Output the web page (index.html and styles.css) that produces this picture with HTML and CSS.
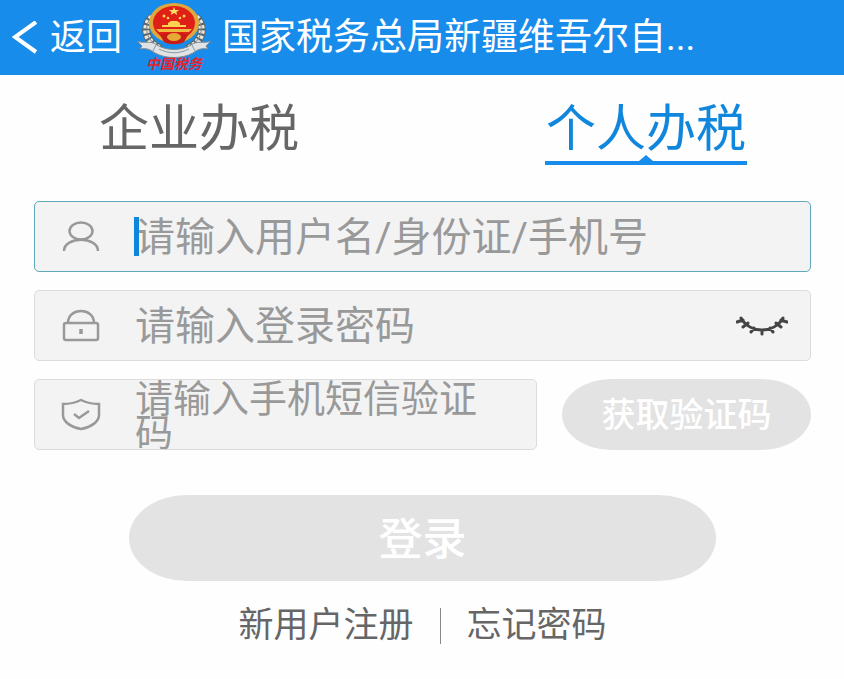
FILE: index.html
```html
<!DOCTYPE html>
<html lang="zh-CN">
<head>
  <meta charset="UTF-8">
  <meta name="viewport" content="width=device-width, initial-scale=1.0">
  <title>个人办税登录</title>
  <link rel="stylesheet" href="styles.css">
</head>
<body>
  <header class="topbar">
    <a class="back" href="#">
      <svg class="back-icon" viewBox="0 0 26 34" aria-hidden="true">
        <path d="M24 1 3 16l21 15" fill="none" stroke="#fff" stroke-width="4"/>
      </svg>
      <span>返回</span>
    </a>
    <svg class="logo" viewBox="0 0 76 70" role="img" aria-label="中国税务">
      <!-- wheat wreath -->
      <path d="M16 14C6 24 9 39 25 46M60 14c10 10 7 25-9 32" fill="none" stroke="#59666b" stroke-width="8"/>
      <path d="M16 14C6 24 9 39 25 46M60 14c10 10 7 25-9 32" fill="none" stroke="#e9e6dc" stroke-width="6" stroke-dasharray="3 2"/>
      <path d="M15 15C7 24 10 38 25 45M61 15c8 9 5 23-10 30" fill="none" stroke="#7d8380" stroke-width="1"/>
      <!-- emblem -->
      <ellipse cx="38" cy="20" rx="25" ry="20" fill="#e0a83a"/>
      <ellipse cx="38" cy="20" rx="21" ry="17" fill="#df2017"/>
      <path d="M38 4l1.300 3h4l-3 2 1 3-3.300-2-3.300 2 1-3-3-2h4z" fill="#ffdf63"/>
      <g fill="#ffd34f">
        <circle cx="28" cy="13" r="1.500"/><circle cx="32" cy="15" r="1.300"/>
        <circle cx="44" cy="15" r="1.300"/><circle cx="48" cy="13" r="1.500"/>
        <path d="M32 20l3-2h6l3 2v2h6v2H26v-2h6z"/>
        <path d="M20 26h36l-3 3H23z" fill="#f0b93f"/>
      </g>
      <path d="M24 32c6-3 22-3 28 0l-4 7c-6 3-14 3-20 0z" fill="#c81c15"/>
      <ellipse cx="38" cy="34" rx="7" ry="4" fill="#e5a936"/>
      <!-- ribbon -->
      <path d="M1 38c6 3 14-1 20 4 10 6 24 6 34 0 6-5 14-1 20-4l-5 5 2 3c-6-1-10 0-15 4-11 6-27 6-38 0-5-4-9-5-15-4l2-3z" fill="#dfe3e5" stroke="#7d8a91"/>
      <path d="M20 42l-3 6M56 42l3 6M23 46c10 5 20 5 30 0" fill="none" stroke="#8d979b"/>
      <text class="logo-text" x="38" y="66" text-anchor="middle">中国税务</text>
    </svg>
    <h1 class="title">国家税务总局新疆维吾尔自...</h1>
  </header>

  <main class="page">
    <nav class="tabs">
      <a class="tab" href="#">企业办税</a>
      <a class="tab active" href="#" aria-current="page">个人办税</a>
    </nav>

    <form class="login-form">
      <div class="field focused">
        <svg class="field-icon" viewBox="0 0 40 36" aria-hidden="true">
          <ellipse cx="20" cy="12" rx="11.500" ry="8.500"/>
          <path d="M3 32c0-15 34-15 34 0"/>
        </svg>
        <div class="entry">
          <input class="input" type="text" aria-label="用户名" placeholder="请输入用户名/身份证/手机号">
          <span class="caret"></span>
        </div>
      </div>

      <div class="field">
        <svg class="field-icon" viewBox="0 0 40 36" aria-hidden="true">
          <rect x="3" y="15" width="34" height="17" rx="2"/>
          <path d="M7 15c0-16 26-16 26 0"/>
          <path d="M20 21v5" stroke-width="3.500"/>
        </svg>
        <div class="entry">
          <input class="input" type="password" aria-label="登录密码" placeholder="请输入登录密码">
        </div>
        <button class="eye" type="button" aria-label="显示密码">
          <svg class="eye-icon" viewBox="0 0 52 22" aria-hidden="true">
            <path d="M5 3c9 16 33 16 42 0M1 7l6-2M7 12l5-4M15 17l3-4M26 19v-4M37 17l-3-4M45 12l-5-4M51 7l-6-2"/>
          </svg>
        </button>
      </div>

      <div class="code-row">
        <div class="field">
          <svg class="field-icon" viewBox="0 0 40 36" aria-hidden="true">
            <path d="M20 3C14 6 8 7 2 7v11c0 7 8 12 18 14 10-2 18-7 18-14V7c-6 0-12-1-18-4z"/>
            <path d="M13 17l5 4 10-7"/>
          </svg>
          <div class="entry">
            <textarea class="input input-code" rows="2" aria-label="短信验证码" placeholder="请输入手机短信验证码"></textarea>
          </div>
        </div>
        <button class="code-btn" type="button">获取验证码</button>
      </div>

      <button class="login-btn" type="submit">登录</button>
    </form>

    <footer class="links">
      <a class="link" href="#">新用户注册</a>
      <a class="link" href="#">忘记密码</a>
    </footer>
  </main>
</body>
</html>
```
FILE: styles.css
```css
* {
  box-sizing: border-box;
}

body {
  margin: 0;
  background: #fefefe;
  color: #666;
  font-family: Roboto, "Noto Sans CJK SC", sans-serif;
}

a {
  color: inherit;
  text-decoration: none;
}

button,
input,
textarea {
  font-family: inherit;
}

/* top bar */
.topbar {
  display: flex;
  align-items: center;
  height: 75px;
  padding: 0 12px;
  background: #188cea;
  color: #fff;
}

.back {
  display: flex;
  align-items: center;
  gap: 12px;
  font-size: 36px;
  line-height: 48px;
}

.back-icon {
  width: 26px;
  height: 34px;
}

.logo {
  width: 76px;
  height: 70px;
  margin: 0 10px 0 14px;
  flex-shrink: 0;
}

.logo-text {
  fill: #e3222a;
  font-size: 14px;
  font-style: italic;
  font-weight: 700;
}

.title {
  margin: 0;
  font-size: 37px;
  font-weight: 400;
  line-height: 48px;
  white-space: nowrap;
}

/* tabs */
.page {
  padding: 26px 33px 0 34px;
}

.tabs {
  display: flex;
  justify-content: space-between;
  padding: 0 64px;
}

.tab {
  position: relative;
  padding: 0 1px 4px;
  border-bottom: 4px solid transparent;
  font-size: 50px;
  line-height: 56px;
}

.tab.active {
  border-color: #188cea;
  color: #1087dc;
}

.tab.active::after {
  content: "";
  position: absolute;
  bottom: 0;
  left: 50%;
  margin-left: -7px;
  border: 7px solid transparent;
  border-top: 0;
  border-bottom: 6px solid #188cea;
}

/* form */
.login-form {
  display: flex;
  flex-direction: column;
  gap: 18px;
  margin-top: 36px;
}

.field {
  display: flex;
  align-items: center;
  flex: 1;
  height: 71px;
  padding: 0 22px 0 26px;
  border: 1px solid #dcdcdc;
  border-radius: 5px;
  background: #f3f3f3;
}

.field.focused {
  border-color: #5fa9b8;
}

.login-form > .field {
  flex: none;
}

.field-icon {
  width: 40px;
  height: 36px;
  margin-right: 34px;
  flex-shrink: 0;
  fill: none;
  stroke: #999;
  stroke-width: 2.5;
}

.entry {
  position: relative;
  display: flex;
  flex: 1;
  min-width: 0;
}

.input {
  width: 100%;
  height: 60px;
  padding: 2px 0 0;
  border: 0;
  outline: 0;
  background: transparent;
  color: #333;
  font-size: 40px;
}

.input::placeholder {
  color: #999;
  opacity: 1;
}

.input-code {
  height: 69px;
  font-size: 38px;
  line-height: 34px;
  overflow: hidden;
  resize: none;
}

.caret {
  position: absolute;
  top: 10px;
  left: -1px;
  width: 5px;
  height: 39px;
  background: #0b86dc;
}

.eye {
  padding: 0;
  border: 0;
  background: none;
}

.eye-icon {
  display: block;
  width: 52px;
  height: 22px;
  fill: none;
  stroke: #444;
  stroke-width: 3;
  stroke-linecap: round;
}

.code-row {
  display: flex;
  gap: 25px;
}

.code-btn,
.login-btn {
  padding: 0 0 4px;
  border: 0;
  background: #e3e3e3;
  color: #fff;
  font-weight: 500;
}

.code-btn {
  width: 249px;
  border-radius: 50px / 36px;
  font-size: 34px;
}

.login-btn {
  height: 86px;
  margin: 27px 95px 0;
  border-radius: 58px / 43px;
  font-size: 44px;
}

/* bottom links */
.links {
  display: flex;
  justify-content: center;
  margin-top: 27px;
}

.link {
  padding: 0 26px;
  font-size: 35px;
  line-height: 36px;
}

.link + .link {
  border-left: 1px solid #888;
}
```
